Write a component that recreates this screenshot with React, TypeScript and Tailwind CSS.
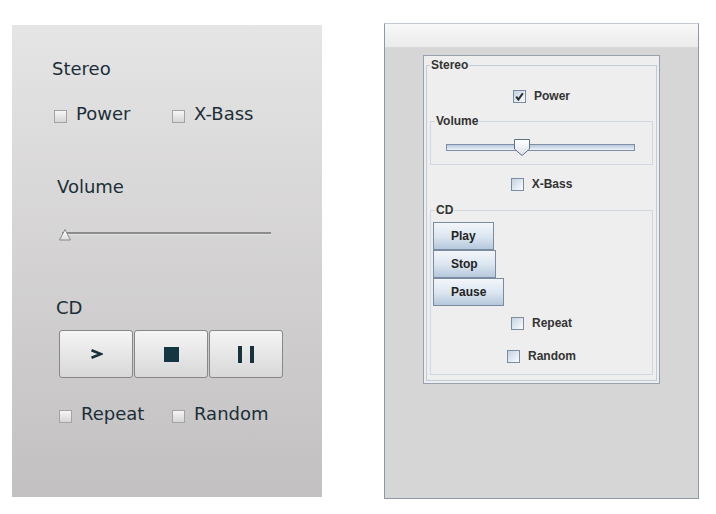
import React from "react";

function FlatCheck({ label, className = "" }: { label: string; className?: string }) {
  return (
    <div className={`flex items-start ${className}`}>
      <span className="mt-[7px] w-[13px] h-[13px] border border-[#a3a3a3] bg-linear-to-b from-[#f6f6f6] to-[#d6d6d6]" />
      <span className="ml-[9px]">{label}</span>
    </div>
  );
}

function SwingCheck({ label, checked = false, className = "" }: { label: string; checked?: boolean; className?: string }) {
  return (
    <div className={`flex justify-center items-center h-[14px] ${className}`}>
      <span className="w-[13px] h-[13px] border border-[#7b8ca1] bg-linear-to-br from-[#c3d2e2] to-[#fbfcfd] flex items-center justify-center">
        {checked && (
          <svg width="11" height="11" viewBox="0 0 11 11">
            <path d="M2.2 5.6 L4.4 8.6 L8.8 2.2" fill="none" stroke="#2b2b2b" strokeWidth="2" />
          </svg>
        )}
      </span>
      <span className="ml-[8px]">{label}</span>
    </div>
  );
}

function SwingButton({ label, className = "" }: { label: string; className?: string }) {
  return (
    <button className={`h-[28px] px-[17px] border border-[#7a8ba1] bg-linear-to-b from-[#f3f6fa] via-[#dde7f1] to-[#b6c8dc] text-[#222] font-bold text-[12px] ${className}`}>
      {label}
    </button>
  );
}

function FlatButton({ children }: { children: React.ReactNode }) {
  return (
    <button className="w-[74px] h-[48px] rounded-[3px] border border-[#878787] bg-linear-to-b from-[#f5f5f5] to-[#d8d8d8] flex items-center justify-center">
      {children}
    </button>
  );
}

export default function App() {
  return (
    <div className="w-[716px] h-[514px] bg-white flex items-start">
      {/* flat mockup */}
      <div className="ml-[12px] mt-[25px] w-[310px] h-[472px] shrink-0 bg-linear-to-b from-[#e6e5e5] to-[#c2c0c1] pl-[40px] pt-[33px] text-[18px] leading-[21px] text-[#1b2f38] font-['DejaVu_Sans',sans-serif]">
        <div>Stereo</div>
        <div className="mt-[24px] ml-[2px] flex">
          <FlatCheck label="Power" className="w-[118px]" />
          <FlatCheck label="X-Bass" />
        </div>
        <div className="mt-[52px] ml-[5px]">Volume</div>
        <svg className="mt-[31px] ml-[5px] block" width="216" height="14" viewBox="0 0 216 14">
          <defs>
            <linearGradient id="thumbFlat" x1="0" y1="0" x2="0" y2="1">
              <stop offset="0" stopColor="#ffffff" />
              <stop offset="1" stopColor="#dcdcdc" />
            </linearGradient>
          </defs>
          <rect x="5" y="4" width="209" height="2" fill="#8c8c8c" />
          <rect x="5" y="6" width="209" height="1" fill="#e2e2e2" />
          <polygon points="8,1.5 13.5,12 2.5,12" fill="url(#thumbFlat)" stroke="#8a8a8a" strokeWidth="1" />
        </svg>
        <div className="mt-[55px] ml-[4px]">CD</div>
        <div className="mt-[12px] ml-[7px] flex gap-[1px]">
          <FlatButton>
            <svg width="13" height="10" viewBox="0 0 13 10">
              <polyline points="1.5,1.2 11,5 1.5,8.8" fill="none" stroke="#17323d" strokeWidth="2.6" />
            </svg>
          </FlatButton>
          <FlatButton>
            <span className="w-[15px] h-[15px] bg-[#143642]" />
          </FlatButton>
          <FlatButton>
            <span className="flex gap-[8px]">
              <span className="w-[4px] h-[17px] bg-[#17323d]" />
              <span className="w-[4px] h-[17px] bg-[#17323d]" />
            </span>
          </FlatButton>
        </div>
        <div className="mt-[25px] ml-[7px] flex">
          <FlatCheck label="Repeat" className="w-[113px]" />
          <FlatCheck label="Random" />
        </div>
      </div>

      {/* swing window */}
      <div className="ml-[62px] mt-[23px] w-[315px] h-[476px] shrink-0 border border-[#8d99aa] border-t-[#c3cad5] bg-[#d6d6d6] flex flex-col font-['Liberation_Sans',Arial,sans-serif] text-[12px] leading-[14px] font-bold text-[#333]">
        <div className="h-[24px] shrink-0 bg-linear-to-b from-[#f8f8f8] to-[#ebebeb] border-b border-[#dadada]" />
        <div className="pl-[38px] pt-[7px]">
          <div className="w-[237px] h-[329px] border border-[#98a2ae] bg-[#eeeeee] p-[2px]">
            <fieldset className="h-full border border-[#c2ccd8] px-[3px]">
              <legend className="px-[1px]">Stereo</legend>
              <SwingCheck label="Power" checked className="mt-[17px]" />
              <fieldset className="mt-[11px] border border-[#d0d7e0] px-[4px] pb-[8px]">
                <legend className="px-[1px]">Volume</legend>
                <div className="relative mt-[11px] ml-[11px] h-[17px]">
                  <div className="absolute left-0 top-[5px] w-[189px] h-[7px] border border-[#7f90a6] bg-linear-to-b from-[#b9c9dc] to-[#eef2f7]" />
                  <svg className="absolute left-[68px] top-0" width="16" height="17" viewBox="0 0 16 17">
                    <defs>
                      <linearGradient id="thumbSwing" x1="0" y1="0" x2="0" y2="1">
                        <stop offset="0" stopColor="#ffffff" />
                        <stop offset="1" stopColor="#dbe3ec" />
                      </linearGradient>
                    </defs>
                    <polygon points="0.5,0.5 15.5,0.5 15.5,10 8,16.5 0.5,10" fill="url(#thumbSwing)" stroke="#5f7189" strokeWidth="1" />
                  </svg>
                </div>
              </fieldset>
              <SwingCheck label="X-Bass" className="mt-[12px]" />
              <fieldset className="mt-[12px] border border-[#d0d7e0] px-[2px] pb-[11px]">
                <legend className="ml-[2px] px-[1px]">CD</legend>
                <div className="mt-[5px] flex flex-col items-start">
                  <SwingButton label="Play" />
                  <SwingButton label="Stop" />
                  <SwingButton label="Pause" className="h-[27px]" />
                </div>
                <SwingCheck label="Repeat" className="mt-[10px]" />
                <SwingCheck label="Random" className="mt-[19px]" />
              </fieldset>
            </fieldset>
          </div>
        </div>
      </div>
    </div>
  );
}
